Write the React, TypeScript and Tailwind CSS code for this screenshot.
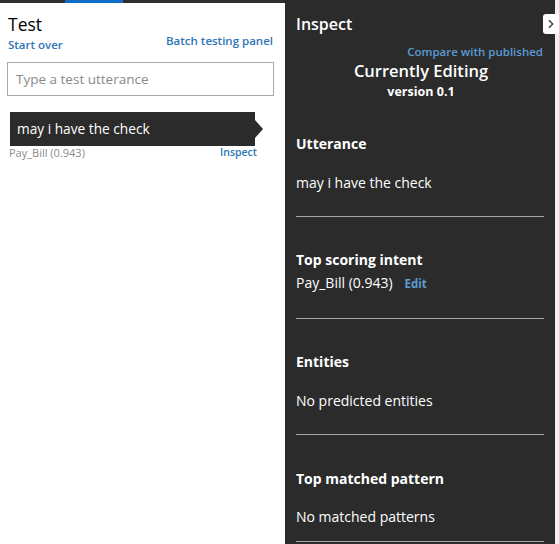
import { ChevronRight } from 'lucide-react';

const font = { fontFamily: '"Open Sans", "Noto Sans", sans-serif' };

function Section({ title, children, className }: { title: string; children: React.ReactNode; className: string }) {
  return (
    <div className={`border-b border-[#a6a6a6] ${className}`}>
      <h3 className="text-[14px] font-bold text-white leading-[18px]">{title}</h3>
      {children}
    </div>
  );
}

export default function App() {
  return (
    <div className="w-[559px] h-[544px] flex overflow-hidden bg-white relative" style={font}>
      {/* left: test panel */}
      <div className="w-[285px] h-full flex flex-col bg-white">
        <div className="h-[3px] flex bg-[#2f2f2f]">
          <div className="w-[65px]" />
          <div className="w-[58px] bg-[#0f6cc9]" />
        </div>
        <div className="px-[7px]">
          <h2 className="text-[17.5px] leading-[22px] mt-[10px] ml-[1px] text-black font-normal">Test</h2>
          <div className="flex justify-between items-start pr-[5px] h-[26px] mt-[-1px]">
            <button className="text-[11.5px] font-semibold text-[#2e75b6] mt-[3px] ml-[1px] leading-[16px]">Start over</button>
            <button className="text-[11.5px] font-semibold text-[#2e75b6] leading-[16px] mt-[-1px]">Batch testing panel</button>
          </div>
          <div className="mt-[2px] w-[267px] h-[34px] border border-[#a9a9a9] flex items-center px-[8px]">
            <span className="text-[13.5px] text-[#8a8a8a]">Type a test utterance</span>
          </div>
          <div className="mt-[16px] ml-[3px] flex items-center">
            <div className="w-[245px] h-[34px] bg-[#2b2b2b] flex items-center px-[7px]">
              <span className="text-[13.7px] text-white">may i have the check</span>
            </div>
            <div className="w-0 h-0 border-y-[9px] border-y-transparent border-l-[8px] border-l-[#2b2b2b]" />
          </div>
          <div className="ml-[2px] w-[248px] flex justify-between items-center mt-[-1px]">
            <span className="text-[11px] text-[#8a8a8a]">Pay_Bill (0.943)</span>
            <span className="text-[10.5px] font-semibold text-[#2e75b6]">Inspect</span>
          </div>
        </div>
      </div>

      {/* right: inspect panel */}
      <div className="w-[270px] h-full bg-[#2b2b2b] flex flex-col px-[11px] pt-[13px]">
        <h2 className="text-[16px] font-semibold text-white leading-[22px]">Inspect</h2>
        <div className="text-right text-[11.5px] font-semibold text-[#5b9bd5] mt-[10px] leading-[14px] pr-[1px]">Compare with published</div>
        <div className="text-center text-[16.5px] font-semibold text-white leading-[22px] mt-[1px] ml-[2px]">Currently Editing</div>
        <div className="text-center text-[12.5px] font-bold text-white leading-[18px] mt-[1px] ml-[2px]">version 0.1</div>

        <div className="mt-[34px] flex flex-col">
          <Section title="Utterance" className="h-[82px]">
            <p className="text-[14px] text-white mt-[21px] leading-[18px]">may i have the check</p>
          </Section>
          <Section title="Top scoring intent" className="h-[102px] pt-[34px]">
            <p className="text-[14px] text-white mt-[5px] leading-[18px]">
              Pay_Bill (0.943)
              <span className="text-[11.5px] font-bold text-[#5b9bd5] ml-[12px]">Edit</span>
            </p>
          </Section>
          <Section title="Entities" className="h-[116px] pt-[34px]">
            <p className="text-[14px] text-white mt-[21px] leading-[18px]">No predicted entities</p>
          </Section>
          <Section title="Top matched pattern" className="h-[107px] pt-[35px]">
            <p className="text-[14px] text-white mt-[20px] leading-[18px]">No matched patterns</p>
          </Section>
        </div>
      </div>
      <div className="flex-1 bg-[#f0f0f0]" />

      {/* collapse button */}
      <button className="absolute right-0 top-[14px] w-[16px] h-[20px] bg-white rounded-l-[3px] flex items-center justify-center">
        <ChevronRight className="w-[14px] h-[14px] text-[#333]" strokeWidth={2} />
      </button>
    </div>
  );
}
